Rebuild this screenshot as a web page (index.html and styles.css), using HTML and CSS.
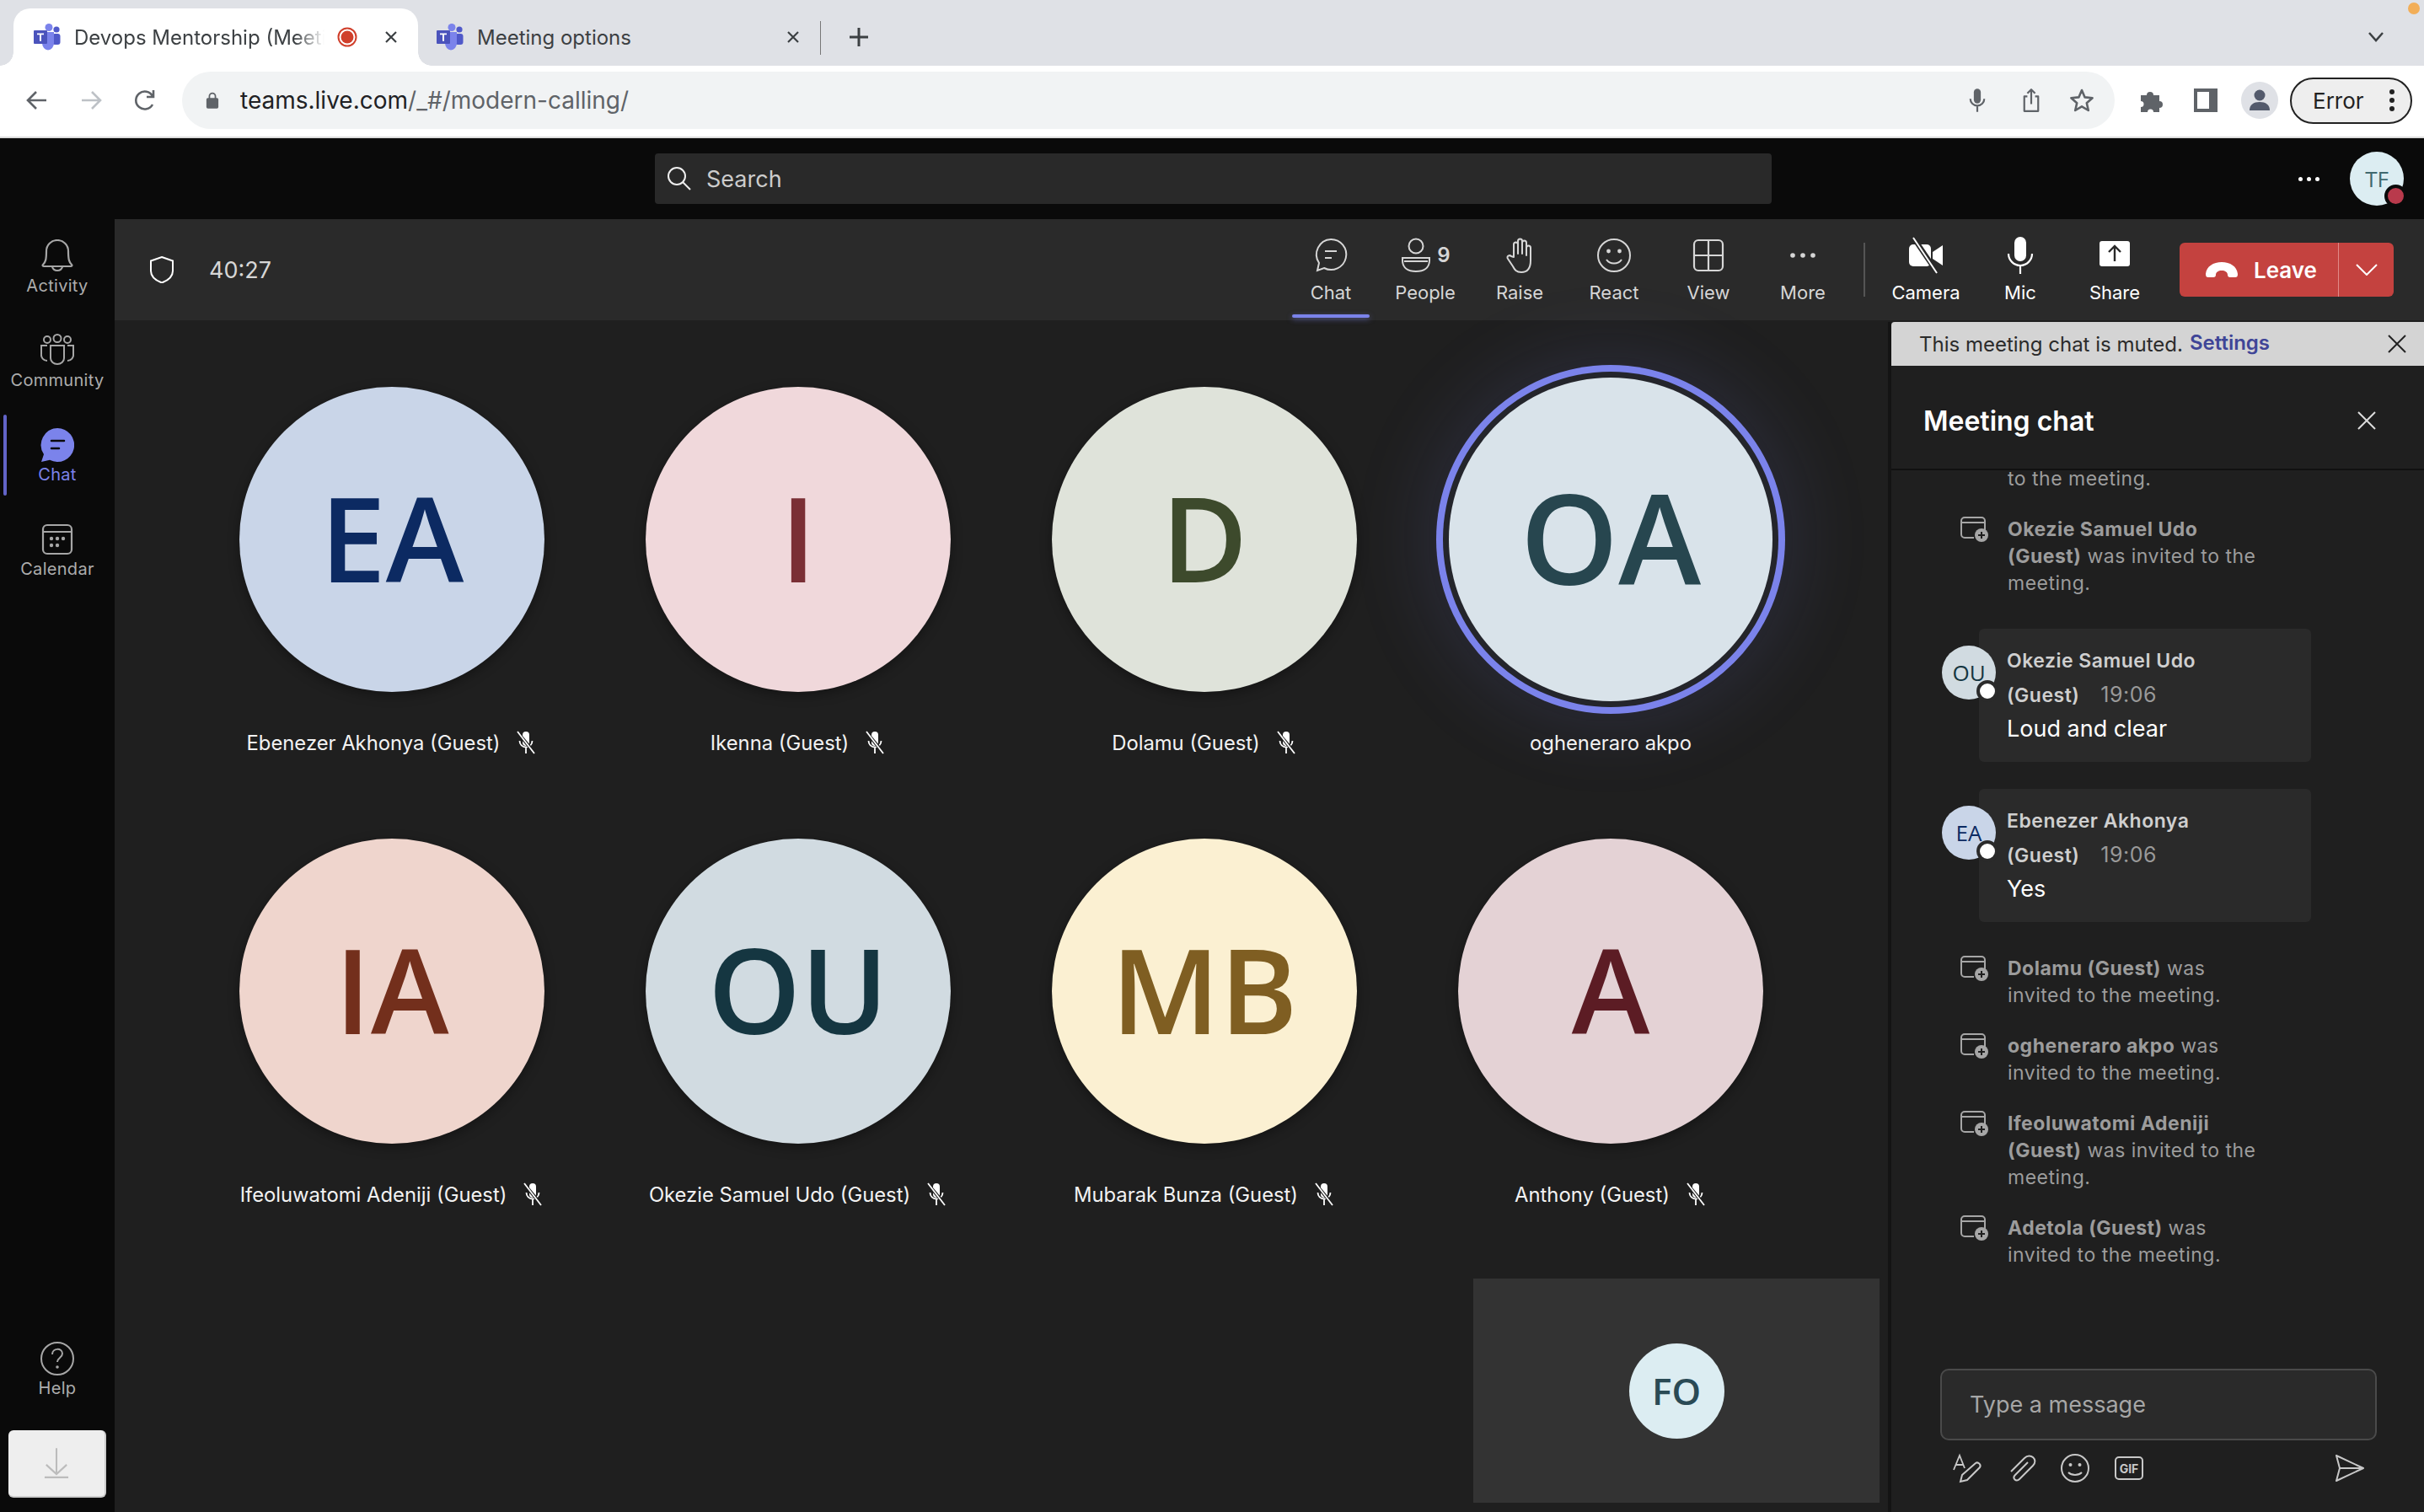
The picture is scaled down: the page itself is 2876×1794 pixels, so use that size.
FILE: index.html
```html
<!DOCTYPE html>
<html lang="en">
<head>
    <meta charset="UTF-8">
    <title>Devops Mentorship</title>
    <link rel="stylesheet" href="styles.css">
</head>
<body>
    <svg class="defs" aria-hidden="true">
        <symbol id="teams" viewBox="0 0 32 32">
            <circle cx="27" cy="7" r="3.6" fill="#5059c9"/>
            <rect x="22" y="12" width="9.5" height="13" rx="3" fill="#5059c9"/>
            <circle cx="18" cy="4.5" r="4.5" fill="#7b83eb"/>
            <path d="M10 10h14v13a7 8.5 0 0 1-14 0z" fill="#7b83eb"/>
            <rect x="0" y="8" width="16" height="16" rx="1" fill="#4b53bc"/>
            <path d="M4 11.5h8v1.8H9v7.5H7v-7.5H4z" fill="#fff"/>
        </symbol>
        <symbol id="micoff" viewBox="0 0 26 28">
            <rect x="9" y="1" width="8" height="17" rx="4" fill="#fff"/>
            <path d="M5.500 12a7.500 7.500 0 0 0 15 0M13 20v7" fill="none" stroke="#fff" stroke-width="1.800"/>
            <path d="M3 2l20 24" stroke="#1f1f1f" stroke-width="4"/>
            <path d="M3 1l20 26" stroke="#fff" stroke-width="1.800"/>
        </symbol>
        <symbol id="invite" viewBox="0 0 34 32">
            <path d="M16 26H5a4 4 0 0 1-4-4V6a4 4 0 0 1 4-4h20a4 4 0 0 1 4 4v11M1 8h28" fill="none" stroke="#a6a6a6" stroke-width="2"/>
            <circle cx="25" cy="23" r="8" fill="#a6a6a6"/>
            <path d="M25 19v8M21 23h8" stroke="#1f1f1f" stroke-width="2"/>
        </symbol>
    </svg>

    <div class="tabstrip">
        <div class="tab tab-active">
            <svg class="tab-logo"><use href="#teams"/></svg>
            <span class="tab-title tab-fade">Devops Mentorship (Meeting) | Microsoft Teams</span>
            <svg class="tab-rec" viewBox="0 0 24 24"><circle cx="12" cy="12" r="10.500" fill="none" stroke="#d03f2b" stroke-width="2"/><circle cx="12" cy="12" r="7.500" fill="#d03f2b"/></svg>
            <svg class="tab-close" viewBox="0 0 16 16"><path d="M2 2l12 12M14 2L2 14" stroke="#3c4043" stroke-width="2.200"/></svg>
        </div>
        <div class="tab tab-other">
            <svg class="tab-logo"><use href="#teams"/></svg>
            <span class="tab-title">Meeting options</span>
            <svg class="tab-close" viewBox="0 0 16 16"><path d="M2 2l12 12M14 2L2 14" stroke="#3c4043" stroke-width="2.200"/></svg>
        </div>
        <div class="tab-divider"></div>
        <svg class="tab-plus" viewBox="0 0 24 24"><path d="M12 1v22M1 12h22" stroke="#3c4043" stroke-width="3"/></svg>
        <svg class="tab-chevron" viewBox="0 0 20 14"><path d="M2 2l8 9 8-9" fill="none" stroke="#3c4043" stroke-width="2.500"/></svg>
        <span class="orange-dot"></span>
    </div>

    <div class="browserbar">
        <svg class="nav-btn" viewBox="0 0 28 28"><path d="M25 14H4M13 4L3 14l10 10" fill="none" stroke="#5f6368" stroke-width="2.600"/></svg>
        <svg class="nav-btn" viewBox="0 0 28 28"><path d="M3 14h21M15 4l10 10-10 10" fill="none" stroke="#bdc1c6" stroke-width="2.600"/></svg>
        <svg class="nav-btn" viewBox="0 0 28 28"><path d="M23 19a10.500 10.500 0 1 1 0-10M24 2v8h-8" fill="none" stroke="#5f6368" stroke-width="2.600"/></svg>
        <div class="urlbar">
            <svg class="url-lock" viewBox="0 0 18 24"><path d="M5 10V6.500a4 4 0 0 1 8 0V10" fill="none" stroke="#5f6368" stroke-width="2"/><rect x="1" y="9" width="16" height="14" rx="2" fill="#5f6368"/></svg>
            <span class="url-text"><b>teams.live.com</b>/_#/modern-calling/</span>
            <svg class="url-icon" viewBox="0 0 24 32"><rect x="7.500" y="1" width="9" height="19" rx="4.500" fill="#5f6368"/><path d="M3 14a9 9 0 0 0 18 0M12 23v8" fill="none" stroke="#5f6368" stroke-width="2.400"/></svg>
            <svg class="url-icon" viewBox="0 0 24 32"><path d="M7 11H3v19h18V11h-4M12 21V2M7 7l5-5 5 5" fill="none" stroke="#5f6368" stroke-width="2.400" stroke-linejoin="round"/></svg>
            <svg class="url-icon url-star" viewBox="0 0 30 30"><path d="M15 3l3.600 8.400 9 .8-6.800 6 2 8.800-7.800-4.700L7.200 27l2-8.800-6.800-6 9-.8z" fill="none" stroke="#5f6368" stroke-width="2.600" stroke-linejoin="round"/></svg>
        </div>
        <svg class="bar-puzzle" viewBox="0 0 30 30"><path d="M2 9h7a4 4 0 1 1 8 0h7v7a4 4 0 1 1 0 8v5h-7a3.500 3.500 0 0 0-7 0H2v-6a3.500 3.500 0 0 0 0-7z" fill="#5f6368"/></svg>
        <span class="bar-panel"></span>
        <span class="bar-profile"><svg viewBox="0 0 26 28"><circle cx="13" cy="8" r="6.500" fill="#535a6c"/><path d="M1 26c0-7 5-10 12-10s12 3 12 10z" fill="#535a6c"/></svg></span>
        <div class="error-pill">
            <span>Error</span>
            <span class="error-dots"><i></i><i></i><i></i></span>
        </div>
    </div>

    <div class="appbar">
        <div class="search">
            <svg class="search-icon" viewBox="0 0 30 30"><circle cx="12" cy="12" r="10" fill="none" stroke="#eee" stroke-width="2"/><path d="M19 19l9 9" stroke="#eee" stroke-width="2"/></svg>
            <span>Search</span>
        </div>
        <span class="app-more"><i></i><i></i><i></i></span>
        <div class="me">TF<span class="me-status"></span></div>
    </div>

    <div class="workspace">
        <nav class="sidebar">
            <a class="side-item">
                <svg class="side-icon" viewBox="0 0 40 40"><path d="M3 30c3-3 4-6 4-16a13 13 0 0 1 26 0c0 10 1 13 4 16 1 1 0 2-1 2H4c-1 0-2-1-1-2zM14 32a6 5 0 0 0 12 0" fill="none" stroke="#a6a6a6" stroke-width="2.200"/></svg>
                <span>Activity</span>
            </a>
            <a class="side-item">
                <svg class="side-icon" viewBox="0 0 40 40"><g fill="none" stroke="#a6a6a6" stroke-width="2"><circle cx="8" cy="7" r="4"/><circle cx="20" cy="5.500" r="4.500"/><circle cx="32" cy="7" r="4"/><path d="M12 14h16v15a8 7 0 0 1-16 0zM8 14H1v10a7 7 0 0 0 7 8M32 14h7v10a7 7 0 0 1-7 8"/></g></svg>
                <span>Community</span>
            </a>
            <a class="side-item side-active">
                <svg class="side-icon" viewBox="0 0 40 40"><path d="M20 0a20 20 0 1 1-9 37.800L1 40l3-9A20 20 0 0 1 20 0z" fill="#7b83eb"/><path d="M13 15h15M13 24h9" stroke="#0a0a0a" stroke-width="2.500" stroke-linecap="round"/></svg>
                <span>Chat</span>
            </a>
            <a class="side-item">
                <svg class="side-icon" viewBox="0 0 40 40"><rect x="3" y="3" width="34" height="34" rx="5" fill="none" stroke="#a6a6a6" stroke-width="2.200"/><path d="M3 11h34" stroke="#a6a6a6" stroke-width="2.200"/><g fill="#a6a6a6"><circle cx="13" cy="19" r="2.200"/><circle cx="20" cy="19" r="2.200"/><circle cx="27" cy="19" r="2.200"/><circle cx="13" cy="27" r="2.200"/><circle cx="20" cy="27" r="2.200"/></g></svg>
                <span>Calendar</span>
            </a>
            <a class="side-item side-help">
                <svg class="side-icon" viewBox="0 0 40 40"><circle cx="20" cy="20" r="19" fill="none" stroke="#a6a6a6" stroke-width="2"/><path d="M14 15c0-8 12-8 12-1 0 5-6 5-6 10" fill="none" stroke="#a6a6a6" stroke-width="2"/><circle cx="20" cy="30" r="1.800" fill="#a6a6a6"/></svg>
                <span>Help</span>
            </a>
            <div class="download">
                <svg viewBox="0 0 32 40"><path d="M16 1v32M3 22l13 12 13-12M1 38h30" fill="none" stroke="#bcbcbc" stroke-width="2.200"/></svg>
            </div>
        </nav>

        <main class="meeting">
            <header class="meetbar">
                <svg class="shield" viewBox="0 0 28 32"><path d="M14 1l13 4.500v12c0 6-5 11-13 14C6 28.500 1 23.500 1 17.500v-12z" fill="none" stroke="#fff" stroke-width="2"/></svg>
                <span class="timer">40:27</span>
                <div class="meet-actions">
                    <a class="action action-on">
                        <svg class="action-icon" viewBox="0 0 40 44"><path d="M20 3a18 18 0 1 1-8 34l-8 3 2-9A18 18 0 0 1 20 3z" fill="none" stroke="#d6d6d6" stroke-width="2"/><path d="M13 17h14M13 25h8" stroke="#d6d6d6" stroke-width="2.200"/></svg>
                        <span>Chat</span>
                        <i class="action-line"></i>
                    </a>
                    <a class="action">
                        <span class="people-row">
                            <svg class="action-icon" viewBox="0 0 40 44"><circle cx="20" cy="11" r="8.500" fill="none" stroke="#d6d6d6" stroke-width="2"/><path d="M4 25h32v3c0 9-7 13-16 13S4 37 4 28z" fill="none" stroke="#d6d6d6" stroke-width="2"/><path d="M6 29h28" stroke="#d6d6d6" stroke-width="2"/></svg>
                            <b class="people-count">9</b>
                        </span>
                        <span>People</span>
                    </a>
                    <a class="action">
                        <svg class="action-icon" viewBox="0 0 40 44"><path d="M13 24V9a2.500 2.500 0 0 1 5 0v11V5a2.500 2.500 0 0 1 5 0v15V7a2.500 2.500 0 0 1 5 0v15V13a2.500 2.500 0 0 1 5 0v15c0 8-3 14-11 14-6 0-8-3-10-7l-6-9c-2-3 2-5 4-3z" fill="none" stroke="#d6d6d6" stroke-width="2" stroke-linejoin="round"/></svg>
                        <span>Raise</span>
                    </a>
                    <a class="action">
                        <svg class="action-icon" viewBox="0 0 40 44"><circle cx="20" cy="22" r="19" fill="none" stroke="#d6d6d6" stroke-width="2"/><circle cx="13.500" cy="17" r="2.400" fill="#d6d6d6"/><circle cx="26.500" cy="17" r="2.400" fill="#d6d6d6"/><path d="M11 27c4 6 14 6 18 0" fill="none" stroke="#d6d6d6" stroke-width="2"/></svg>
                        <span>React</span>
                    </a>
                    <a class="action">
                        <svg class="action-icon" viewBox="0 0 40 44"><rect x="3" y="4" width="34" height="36" rx="5" fill="none" stroke="#d6d6d6" stroke-width="2.200"/><path d="M20 4v36M3 22h34" stroke="#d6d6d6" stroke-width="2.200"/></svg>
                        <span>View</span>
                    </a>
                    <a class="action">
                        <svg class="action-icon" viewBox="0 0 40 44"><g fill="#d6d6d6"><circle cx="8" cy="22" r="2.800"/><circle cx="20" cy="22" r="2.800"/><circle cx="32" cy="22" r="2.800"/></g></svg>
                        <span>More</span>
                    </a>
                    <i class="meet-divider"></i>
                    <a class="action action-bright">
                        <svg class="action-icon" viewBox="0 0 44 44"><rect x="2" y="9" width="26" height="26" rx="5" fill="#fff"/><path d="M30 18l12-8v24l-12-8z" fill="#fff"/><path d="M8 2l27 40" stroke="#292929" stroke-width="6"/><path d="M7 1l28 42" stroke="#fff" stroke-width="2"/></svg>
                        <span>Camera</span>
                    </a>
                    <a class="action action-bright">
                        <svg class="action-icon" viewBox="0 0 40 44"><rect x="13" y="0" width="14" height="29" rx="7" fill="#fff"/><path d="M6 20a14 14 0 0 0 28 0M20 35v9" fill="none" stroke="#fff" stroke-width="2.200"/></svg>
                        <span>Mic</span>
                    </a>
                    <a class="action action-bright">
                        <svg class="action-icon" viewBox="0 0 40 44"><rect x="2" y="5" width="36" height="30" rx="3" fill="#fff"/><path d="M20 29V12M13 18l7-7 7 7" fill="none" stroke="#292929" stroke-width="2.400"/></svg>
                        <span>Share</span>
                    </a>
                    <div class="leave">
                        <div class="leave-main">
                            <svg viewBox="0 0 40 20"><path d="M1 15C2 6 10 1 20 1s18 5 19 14c0 3-1 4-3 4h-6c-2 0-3-1-3-3 0-3-3-5-7-5s-7 2-7 5c0 2-1 3-3 3H4c-2 0-3-1-3-4z" fill="#fff"/></svg>
                            <span>Leave</span>
                        </div>
                        <div class="leave-more">
                            <svg viewBox="0 0 26 14"><path d="M1 1l12 12L25 1" fill="none" stroke="#fff" stroke-width="2"/></svg>
                        </div>
                    </div>
                </div>
            </header>

            <div class="meet-body">
                <section class="stage">
                    <div class="tile">
                        <div class="avatar av-ea">EA</div>
                        <div class="tile-name">Ebenezer Akhonya (Guest)<svg class="mic-off"><use href="#micoff"/></svg></div>
                    </div>
                    <div class="tile">
                        <div class="avatar av-i">I</div>
                        <div class="tile-name">Ikenna (Guest)<svg class="mic-off"><use href="#micoff"/></svg></div>
                    </div>
                    <div class="tile">
                        <div class="avatar av-d">D</div>
                        <div class="tile-name">Dolamu (Guest)<svg class="mic-off"><use href="#micoff"/></svg></div>
                    </div>
                    <div class="tile">
                        <div class="avatar av-oa speaking">OA</div>
                        <div class="tile-name">ogheneraro akpo</div>
                    </div>
                    <div class="tile">
                        <div class="avatar av-ia">IA</div>
                        <div class="tile-name">Ifeoluwatomi Adeniji (Guest)<svg class="mic-off"><use href="#micoff"/></svg></div>
                    </div>
                    <div class="tile">
                        <div class="avatar av-ou">OU</div>
                        <div class="tile-name">Okezie Samuel Udo (Guest)<svg class="mic-off"><use href="#micoff"/></svg></div>
                    </div>
                    <div class="tile">
                        <div class="avatar av-mb">MB</div>
                        <div class="tile-name">Mubarak Bunza (Guest)<svg class="mic-off"><use href="#micoff"/></svg></div>
                    </div>
                    <div class="tile">
                        <div class="avatar av-a">A</div>
                        <div class="tile-name">Anthony (Guest)<svg class="mic-off"><use href="#micoff"/></svg></div>
                    </div>
                    <div class="self-view">
                        <div class="self-avatar">FO</div>
                    </div>
                </section>

                <aside class="chat">
                    <div class="muted-bar">
                        <span>This meeting chat is muted.</span>
                        <a class="muted-link">Settings</a>
                        <svg class="muted-close" viewBox="0 0 24 24"><path d="M2 2l20 20M22 2L2 22" stroke="#222" stroke-width="2"/></svg>
                    </div>
                    <div class="chat-head">
                        <h2>Meeting chat</h2>
                        <svg viewBox="0 0 24 24"><path d="M2 2l20 20M22 2L2 22" stroke="#ddd" stroke-width="2"/></svg>
                    </div>
                    <div class="chat-list">
                        <div class="sys sys-cut"><p>to the meeting.</p></div>
                        <div class="sys">
                            <svg class="sys-icon"><use href="#invite"/></svg>
                            <p><b>Okezie Samuel Udo (Guest)</b> was invited to the meeting.</p>
                        </div>
                        <div class="msg">
                            <div class="msg-avatar av-ou">OU<i class="msg-status"></i></div>
                            <div class="bubble">
                                <div class="msg-head"><b>Okezie Samuel Udo (Guest)</b><time>19:06</time></div>
                                <div class="msg-text">Loud and clear</div>
                            </div>
                        </div>
                        <div class="msg">
                            <div class="msg-avatar av-ea">EA<i class="msg-status"></i></div>
                            <div class="bubble">
                                <div class="msg-head"><b>Ebenezer Akhonya (Guest)</b><time>19:06</time></div>
                                <div class="msg-text">Yes</div>
                            </div>
                        </div>
                        <div class="sys">
                            <svg class="sys-icon"><use href="#invite"/></svg>
                            <p><b>Dolamu (Guest)</b> was invited to the meeting.</p>
                        </div>
                        <div class="sys">
                            <svg class="sys-icon"><use href="#invite"/></svg>
                            <p><b>ogheneraro akpo</b> was invited to the meeting.</p>
                        </div>
                        <div class="sys">
                            <svg class="sys-icon"><use href="#invite"/></svg>
                            <p><b>Ifeoluwatomi Adeniji (Guest)</b> was invited to the meeting.</p>
                        </div>
                        <div class="sys">
                            <svg class="sys-icon"><use href="#invite"/></svg>
                            <p><b>Adetola (Guest)</b> was invited to the meeting.</p>
                        </div>
                    </div>
                    <div class="composer">
                        <div class="composer-input">Type a message</div>
                        <div class="composer-tools">
                            <svg viewBox="0 0 36 36"><path d="M2 20L9 3l6 15M5 14h8" fill="none" stroke="#c8c8c8" stroke-width="1.800"/><path d="M10 34l2-8L28 12c3-2 7 2 5 5L18 32z" fill="none" stroke="#c8c8c8" stroke-width="2"/></svg>
                            <svg viewBox="0 0 36 36"><path d="M26 11L11 26c-4 4 1 9 5 5l16-16c7-7-3-16-10-9L6 22" fill="none" stroke="#c8c8c8" stroke-width="2"/></svg>
                            <svg viewBox="0 0 36 36"><circle cx="18" cy="18" r="16" fill="none" stroke="#c8c8c8" stroke-width="2"/><circle cx="12.500" cy="14" r="2" fill="#c8c8c8"/><circle cx="23.500" cy="14" r="2" fill="#c8c8c8"/><path d="M10 23c4 4 12 4 16 0" fill="none" stroke="#c8c8c8" stroke-width="2"/></svg>
                            <span class="gif">GIF</span>
                            <svg class="send" viewBox="0 0 36 36"><path d="M2 3l32 15L2 33l4-15zM6 18h28" fill="none" stroke="#c8c8c8" stroke-width="2" stroke-linejoin="round"/></svg>
                        </div>
                    </div>
                </aside>
            </div>
        </main>
    </div>
</body>
</html>
```

FILE: styles.css
```css
*{
    box-sizing: border-box;
}
body{
    margin: 0;
    width: 2876px;
    height: 1794px;
    overflow: hidden;
    display: flex;
    flex-direction: column;
    background-color: #0a0a0a;
    font-family: Inter, "Liberation Sans", sans-serif;
}
.defs{
    width: 0;
    height: 0;
    position: absolute;
}

/* browser tabs */
.tabstrip{
    height: 78px;
    flex: none;
    display: flex;
    align-items: flex-end;
    padding-left: 16px;
    background-color: #dfe1e6;
    position: relative;
    font-size: 24px;
    color: #3c4043;
}
.tab{
    height: 68px;
    width: 480px;
    display: flex;
    align-items: center;
    padding: 0 0 0 24px;
    position: relative;
}
.tab-active{
    background-color: #fff;
    border-radius: 20px 20px 0 0;
}
.tab-active::before,
.tab-active::after{
    content: "";
    position: absolute;
    bottom: 0;
    width: 16px;
    height: 16px;
}
.tab-active::before{
    left: -16px;
    background: radial-gradient(circle at 0 0, #dfe1e6 15.500px, #fff 16px);
}
.tab-active::after{
    right: -16px;
    background: radial-gradient(circle at 100% 0, #dfe1e6 15.500px, #fff 16px);
}
.tab-other{
    padding-left: 22px;
}
.tab-logo{
    width: 32px;
    height: 32px;
    flex: none;
    margin-right: 16px;
}
.tab-title{
    white-space: nowrap;
    overflow: hidden;
    width: 297px;
    flex: none;
}
.tab-fade{
    -webkit-mask-image: linear-gradient(to right, #000 88%, transparent 100%);
    mask-image: linear-gradient(to right, #000 88%, transparent 100%);
}
.tab-other .tab-title{
    width: 367px;
}
.tab-rec{
    width: 24px;
    height: 24px;
    margin-left: 15px;
}
.tab-close{
    width: 16px;
    height: 16px;
    margin-left: 32px;
}
.tab-other .tab-close{
    margin-left: 0;
}
.tab-divider{
    width: 1px;
    height: 40px;
    background-color: #777;
    margin: 0 0 13px -3px;
}
.tab-plus{
    width: 24px;
    height: 24px;
    margin: 0 0 22px 33px;
}
.tab-chevron{
    width: 20px;
    height: 14px;
    margin: 0 47px 27px auto;
}
.orange-dot{
    position: absolute;
    top: 3px;
    right: 5px;
    width: 14px;
    height: 14px;
    border-radius: 50%;
    background-color: #f2ae58;
}

/* browser toolbar */
.browserbar{
    height: 86px;
    flex: none;
    display: flex;
    align-items: center;
    padding: 0 13px 2px 30px;
    background-color: #fff;
    border-bottom: 2px solid #dcdcdc;
}
.nav-btn{
    width: 28px;
    height: 28px;
    margin-right: 36px;
}
.urlbar{
    width: 2293px;
    height: 68px;
    margin-left: -6px;
    flex: none;
    display: flex;
    align-items: center;
    padding: 0 24px 0 28px;
    background-color: #f1f3f4;
    border-radius: 34px;
}
.url-lock{
    width: 16px;
    height: 22px;
    margin-right: 25px;
}
.url-text{
    font-size: 28px;
    color: #5f6368;
    flex: 1;
}
.url-text b{
    font-weight: 400;
    color: #202124;
}
.url-icon{
    width: 22px;
    height: 30px;
    margin-left: 42px;
}
.url-star{
    width: 30px;
    margin-left: 34px;
}
.bar-puzzle{
    width: 30px;
    height: 30px;
    margin-left: 29px;
}
.bar-panel{
    width: 28px;
    height: 28px;
    margin-left: 35px;
    background-color: #fff;
    border: 7px solid #5f6368;
    border-right-width: 10px;
    border-left-width: 4px;
    border-top-width: 4px;
    border-bottom-width: 4px;
    flex: none;
}
.bar-profile{
    width: 44px;
    height: 44px;
    border-radius: 50%;
    margin-left: 28px;
    background-color: #dfe1e6;
    display: flex;
    align-items: center;
    justify-content: center;
    flex: none;
}
.bar-profile svg{
    width: 26px;
    height: 28px;
}
.error-pill{
    width: 145px;
    height: 55px;
    margin-left: 14px;
    flex: none;
    border: 2px solid #222;
    border-radius: 28px;
    background-color: #eee;
    display: flex;
    align-items: center;
    padding-left: 25px;
    font-size: 26px;
    color: #222;
}
.error-dots{
    display: flex;
    flex-direction: column;
    gap: 4px;
    margin-left: 30px;
}
.error-dots i{
    width: 6px;
    height: 6px;
    border-radius: 50%;
    background-color: #222;
}

/* teams top bar */
.appbar{
    height: 96px;
    flex: none;
    display: flex;
    align-items: center;
    padding-left: 777px;
    background-color: #0a0a0a;
}
.search{
    width: 1325px;
    height: 60px;
    display: flex;
    align-items: center;
    padding-left: 14px;
    background-color: #292929;
    border-radius: 4px;
    color: #ccc;
    font-size: 27px;
}
.search-icon{
    width: 30px;
    height: 30px;
    margin-right: 17px;
}
.app-more{
    display: flex;
    gap: 5px;
    margin-left: 625px;
}
.app-more i{
    width: 5px;
    height: 5px;
    border-radius: 50%;
    background-color: #fff;
}
.me{
    width: 64px;
    height: 64px;
    margin-left: 36px;
    border-radius: 50%;
    background-color: #dcedf2;
    color: #40696f;
    font: 26px "Open Sans", sans-serif;
    display: flex;
    align-items: center;
    justify-content: center;
    position: relative;
}
.me-status{
    position: absolute;
    right: -4px;
    bottom: -2px;
    width: 27px;
    height: 27px;
    border-radius: 50%;
    background-color: #b93a4c;
    border: 4px solid #0a0a0a;
}

/* layout under the top bar */
.workspace{
    flex: 1;
    display: flex;
    min-height: 0;
}
.sidebar{
    width: 136px;
    flex: none;
    display: flex;
    flex-direction: column;
    align-items: center;
    gap: 16px;
    padding-top: 8px;
    background-color: #0a0a0a;
}
.side-item{
    width: 136px;
    height: 96px;
    display: flex;
    flex-direction: column;
    align-items: center;
    padding-top: 16px;
    gap: 3px;
    font-size: 20px;
    letter-spacing: .3px;
    color: #adadad;
    position: relative;
}
.side-icon{
    width: 40px;
    height: 40px;
}
.side-active{
    color: #7b83eb;
}
.side-active::before{
    content: "";
    position: absolute;
    left: 4px;
    top: 0;
    width: 4px;
    height: 96px;
    border-radius: 2px;
    background-color: #6264c8;
}
.side-help{
    margin-top: auto;
    height: 90px;
    padding-top: 0;
}
.download{
    width: 116px;
    height: 80px;
    margin: -1px 0 17px;
    background-color: #eee;
    border-radius: 6px;
    border-bottom: 2px solid #ccc;
    border-right: 2px solid #ccc;
    display: flex;
    align-items: center;
    justify-content: center;
}
.download svg{
    width: 30px;
    height: 40px;
}

/* call toolbar */
.meeting{
    flex: 1;
    display: flex;
    flex-direction: column;
    min-width: 0;
    background-color: #1f1f1f;
}
.meetbar{
    height: 120px;
    flex: none;
    display: flex;
    align-items: center;
    padding: 0 36px 0 42px;
    background-color: #2a2a2a;
}
.shield{
    width: 28px;
    height: 32px;
}
.timer{
    font-size: 27px;
    color: #d6d6d6;
    margin-left: 42px;
}
.meet-actions{
    margin-left: auto;
    display: flex;
    align-items: flex-start;
    height: 120px;
}
.action{
    width: 112px;
    height: 120px;
    display: flex;
    flex-direction: column;
    align-items: center;
    padding-top: 21px;
    font-size: 22px;
    color: #d6d6d6;
}
.action > span:last-of-type{
    margin-top: 9px;
    line-height: 26px;
}
.action-icon{
    width: 44px;
    height: 44px;
    display: block;
    flex: none;
}
.action-bright{
    color: #fff;
}
.action-line{
    width: 92px;
    height: 4px;
    margin-top: 13px;
    border-radius: 2px;
    background-color: #7b83eb;
    box-shadow: 0 2px 6px rgba(123,131,235,.5);
}
.people-row{
    display: flex;
    align-items: center;
    height: 44px;
    margin-left: 4px;
}
.people-row .action-icon{
    margin-left: -7px;
}
.people-count{
    font-size: 24px;
    font-weight: 600;
    margin-left: 3px;
    line-height: 44px;
}
.meet-divider{
    width: 2px;
    height: 64px;
    margin: 28px 16px 0;
    background-color: #555;
}
.leave{
    width: 254px;
    height: 64px;
    margin: 28px 0 0 21px;
    display: flex;
    border-radius: 6px;
    overflow: hidden;
    background-color: #c4423f;
    color: #fff;
}
.leave-main{
    width: 189px;
    display: flex;
    align-items: center;
    padding-left: 30px;
    gap: 18px;
    font-size: 26px;
    font-weight: 600;
    border-right: 1px solid #e08a88;
}
.leave-main svg{
    width: 40px;
    height: 20px;
}
.leave-more{
    flex: 1;
    display: flex;
    align-items: center;
    justify-content: center;
}
.leave-more svg{
    width: 26px;
    height: 14px;
}

/* video stage */
.meet-body{
    flex: 1;
    display: flex;
    min-height: 0;
}
.stage{
    flex: 1;
    display: grid;
    grid-template-columns: repeat(4, 482px);
    grid-auto-rows: 536px;
    padding: 79px 0 0 88px;
    position: relative;
    min-width: 0;
}
.tile{
    display: flex;
    flex-direction: column;
    align-items: center;
}
.avatar{
    width: 362px;
    height: 362px;
    flex: none;
    border-radius: 50%;
    display: flex;
    align-items: center;
    justify-content: center;
    font: 600 140px/1 "Open Sans", sans-serif;
    padding-bottom: 6px;
    box-shadow: 0 4px 14px rgba(0,0,0,.35);
}
.speaking{
    width: 384px;
    height: 384px;
    margin: -11px;
    font-size: 148px;
    box-shadow: 0 0 0 7px #24252b, 0 0 0 15px #7b83eb, 0 0 90px 30px rgba(123,131,235,.13);
}
.av-ea{ background-color: #c9d5e8; color: #0c2a62; }
.av-i{ background-color: #f0d8db; color: #7a2f35; }
.av-d{ background-color: #dfe3da; color: #3d4a2c; }
.av-oa{ background-color: #d9e3ea; color: #27464f; }
.av-ia{ background-color: #efd5cd; color: #732f1c; }
.av-ou{ background-color: #d1dbe1; color: #153641; }
.av-mb{ background-color: #fbf0d2; color: #7f5e22; }
.av-a{ background-color: #e4d2d5; color: #5c1c24; }
.tile-name{
    margin-top: 44px;
    height: 32px;
    display: flex;
    align-items: center;
    font-size: 23.800px;
    color: #f2f2f2;
    white-space: nowrap;
}
.mic-off{
    width: 26px;
    height: 28px;
    margin-left: 18px;
}
.self-view{
    position: absolute;
    left: 1612px;
    top: 1137px;
    width: 482px;
    height: 266px;
    background-color: #333;
    display: flex;
    align-items: center;
    justify-content: center;
}
.self-avatar{
    width: 113px;
    height: 113px;
    border-radius: 50%;
    background-color: #dcedf2;
    color: #2a4a55;
    font: 600 44px "Open Sans", sans-serif;
    display: flex;
    align-items: center;
    justify-content: center;
}

/* chat panel */
.chat{
    width: 636px;
    flex: none;
    display: flex;
    flex-direction: column;
    margin-top: 2px;
    border-left: 4px solid #141414;
    background-color: #1f1f1f;
}
.muted-bar{
    height: 52px;
    flex: none;
    display: flex;
    align-items: center;
    padding: 0 0 0 33px;
    background-color: #d4d4d4;
    color: #2b2b2b;
    font-size: 24px;
    border-radius: 4px 0 0 0;
}
.muted-link{
    margin: -4px 0 0 8px;
    font-weight: 600;
    color: #3f4597;
}
.muted-close{
    width: 24px;
    height: 24px;
    margin-left: auto;
    margin-right: 20px;
}
.chat-head{
    height: 124px;
    flex: none;
    display: flex;
    align-items: center;
    justify-content: space-between;
    padding: 8px 56px 0 38px;
    border-bottom: 2px solid #111;
}
.chat-head h2{
    margin: 0;
    font-size: 32px;
    font-weight: 600;
    color: #fff;
}
.chat-head svg{
    width: 24px;
    height: 24px;
}
.chat-list{
    flex: 1;
    min-height: 0;
    overflow: hidden;
    display: flex;
    flex-direction: column;
}
.sys{
    display: flex;
    padding-left: 82px;
    gap: 22px;
    margin-top: 28px;
    font-size: 23px;
    line-height: 32px;
    letter-spacing: .5px;
    color: #9c9c9c;
}
.sys p{
    margin: 0;
    width: 310px;
}
.sys b{
    font-weight: 700;
}
.sys-cut{
    padding-left: 138px;
    margin-top: -6px;
}
.sys-cut + .sys{
    margin-top: 28px;
}
.sys-icon{
    width: 34px;
    height: 32px;
    flex: none;
}
.msg{
    position: relative;
    margin-top: 38px;
    padding-left: 104px;
}
.msg + .msg{
    margin-top: 32px;
}
.msg + .sys{
    margin-top: 39px;
}
.bubble{
    width: 394px;
    height: 158px;
    padding: 18px 20px 0 33px;
    border-radius: 6px;
    background-color: #2a2a2a;
}
.msg-head{
    font-size: 23px;
    line-height: 40px;
    letter-spacing: .5px;
    color: #999;
}
.msg-head b{
    font-weight: 600;
    color: #cfcfcf;
}
.msg-head time{
    font-size: 25px;
    margin-left: 25px;
}
.msg-text{
    font-size: 27px;
    line-height: 40px;
    color: #fff;
}
.msg-avatar{
    position: absolute;
    left: 60px;
    top: 20px;
    width: 64px;
    height: 64px;
    border-radius: 50%;
    display: flex;
    align-items: center;
    justify-content: center;
    font: 400 26px "Open Sans", sans-serif;
}
.msg-status{
    position: absolute;
    left: 41px;
    top: 41px;
    width: 26px;
    height: 26px;
    border-radius: 50%;
    background-color: #fff;
    border: 4px solid #2a2a2a;
}

/* message box */
.composer{
    flex: none;
    height: 170px;
    padding-left: 58px;
}
.composer-input{
    width: 518px;
    height: 85px;
    display: flex;
    align-items: center;
    padding-left: 33px;
    border: 2px solid #4a4a4a;
    border-radius: 10px;
    background-color: #2a2a2a;
    color: #a6a6a6;
    font-size: 27px;
}
.composer-tools{
    display: flex;
    align-items: center;
    gap: 28px;
    margin-top: 15px;
    padding: 0 70px 0 14px;
    height: 36px;
}
.composer-tools svg{
    width: 36px;
    height: 36px;
    flex: none;
}
.composer-tools .send{
    margin-left: auto;
}
.gif{
    width: 34px;
    height: 28px;
    flex: none;
    margin: 0 1px;
    border: 2px solid #c8c8c8;
    border-radius: 5px;
    display: flex;
    align-items: center;
    justify-content: center;
    font-size: 14px;
    font-weight: 700;
    color: #c8c8c8;
}
```
